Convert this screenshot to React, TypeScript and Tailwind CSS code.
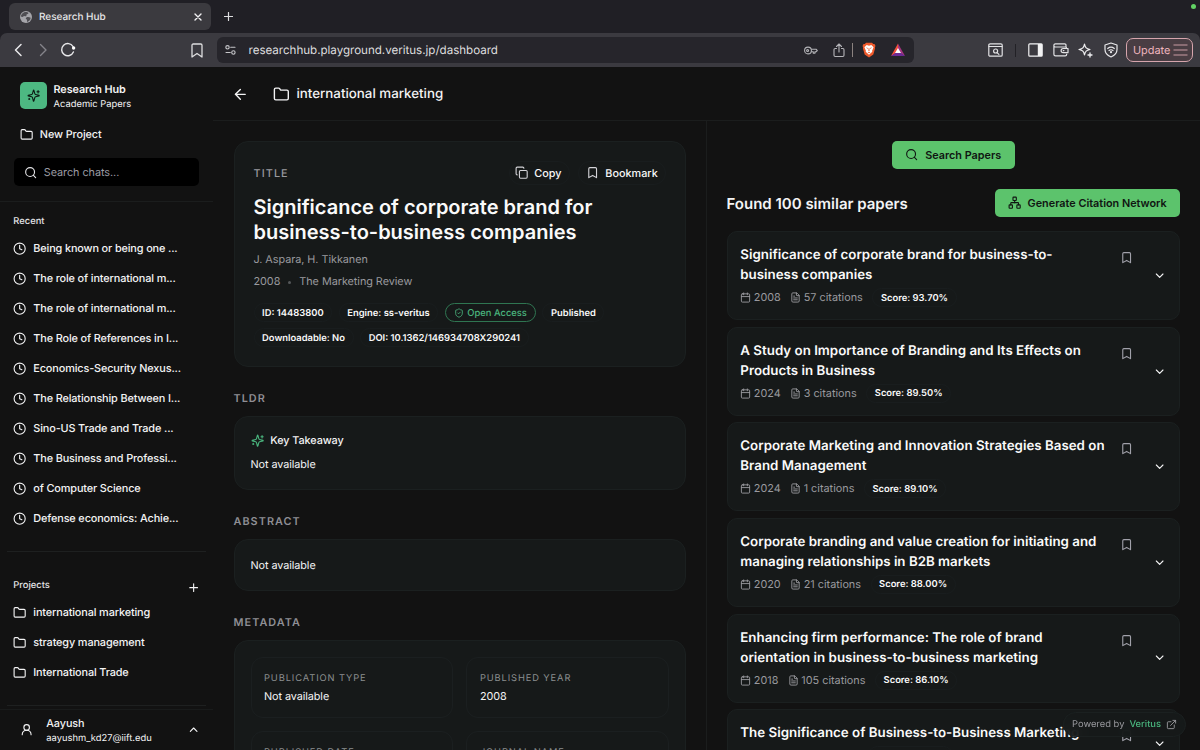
import type { ReactNode } from "react";
import {
  ArrowLeft,
  Bookmark,
  Calendar,
  ChevronDown,
  ChevronUp,
  Clock,
  Copy,
  ExternalLink,
  FileText,
  Folder,
  Network,
  Plus,
  Search,
  ShieldCheck,
  UserRound,
} from "lucide-react";

const recents = [
  "Being known or being one ...",
  "The role of international m...",
  "The role of international m...",
  "The Role of References in I...",
  "Economics-Security Nexus...",
  "The Relationship Between I...",
  "Sino-US Trade and Trade ...",
  "The Business and Professi...",
  "of Computer Science",
  "Defense economics: Achie...",
];

const projects = ["international marketing", "strategy management", "International Trade"];

const papers = [
  { lines: ["Significance of corporate brand for business-to-", "business companies"], year: "2008", cites: 57, score: "93.70" },
  { lines: ["A Study on Importance of Branding and Its Effects on", "Products in Business"], year: "2024", cites: 3, score: "89.50" },
  { lines: ["Corporate Marketing and Innovation Strategies Based on", "Brand Management"], year: "2024", cites: 1, score: "89.10" },
  { lines: ["Corporate branding and value creation for initiating and", "managing relationships in B2B markets"], year: "2020", cites: 21, score: "88.00" },
  { lines: ["Enhancing firm performance: The role of brand", "orientation in business-to-business marketing"], year: "2018", cites: 105, score: "86.10" },
  { lines: ["The Significance of Business-to-Business Marketing"], year: "2019", cites: 12, score: "85.90" },
];

function Sparkles({ color }: { color: string }) {
  return (
    <svg width="13.300" height="13.300" viewBox="0 0 24 24" fill="none" stroke={color} strokeWidth="2" strokeLinecap="round" strokeLinejoin="round">
      <path d="M9.937 15.500A2 2 0 0 0 8.500 14.063l-6.135-1.582a.5.5 0 0 1 0-.962L8.500 9.936A2 2 0 0 0 9.937 8.500l1.582-6.135a.5.5 0 0 1 .963 0L14.063 8.500A2 2 0 0 0 15.500 9.937l6.135 1.581a.5.5 0 0 1 0 .964L15.500 14.063a2 2 0 0 0-1.437 1.437l-1.582 6.135a.5.5 0 0 1-.963 0z" />
      <path d="M20 3v4M22 5h-4M4 17v2M5 18H3" />
    </svg>
  );
}

function BrowserChrome() {
  return (
    <div className="h-[67px] shrink-0 bg-[#201f25]">
      <div className="relative flex h-[33px] pl-[9px] pt-[3px]">
        <div className="flex h-[27px] w-[202px] items-center rounded-[6px] bg-[#3b3a3f] pl-[11px] pr-[9px]">
          <svg width="12" height="12" viewBox="0 0 12 12">
            <circle cx="6" cy="6" r="6" fill="#a5a5aa" />
            <path d="M4.200 1.200C6 .6 8 1.200 8.600 2c-.2 1-1.600 1-2 1.600-.3.600.2 1.200-.5 1.600-.8.400-1.300-.4-2-.3-.8.100-.8 1-1.600 1L.8 5.600C1 3.500 2.500 1.800 4.200 1.200zM6.800 6.200c1-.6 2.600-.2 3.900.6-.3 2-1.700 3.600-3.500 4.200-.6-.7.200-1.600-.3-2.300-.4-.5-1.200-.6-1.100-1.400 0-.5.5-.8 1-1.100z" fill="#4f4e53" />
          </svg>
          <span className="ml-[7px] flex-1 text-[10px] font-medium leading-[14px] tracking-[-0.03px] text-[#e6e6e8]">Research Hub</span>
          <svg width="8" height="8" viewBox="0 0 8 8" stroke="#f0f0f2" strokeWidth="1.4" strokeLinecap="round">
            <path d="m1 1 6 6M7 1 1 7" />
          </svg>
        </div>
        <svg className="ml-[13px] mt-[9px]" width="9" height="9" viewBox="0 0 9 9" stroke="#dcdcdf" strokeWidth="1.2" strokeLinecap="round">
          <path d="M4.500.5v8M.5 4.500h8" />
        </svg>
        <div className="absolute right-1 top-1 size-[5px] rounded-full bg-[#62d264]" />
      </div>
      <div className="flex h-[34px] items-center rounded-t-[7px] bg-[#3b3a40] pl-[14px] pr-[7px]">
        <svg width="9" height="14" viewBox="0 0 9 14" fill="none" stroke="#e8e8ea" strokeWidth="1.5" strokeLinecap="round" strokeLinejoin="round">
          <path d="M7 1.500 1.500 7 7 12.500" />
        </svg>
        <svg className="ml-4" width="9" height="14" viewBox="0 0 9 14" fill="none" stroke="#85848a" strokeWidth="1.400" strokeLinecap="round" strokeLinejoin="round">
          <path d="M1.500 1.500 7 7l-5.500 5.500" />
        </svg>
        <svg className="ml-[12px]" width="16" height="16" viewBox="0 0 16 16" fill="none" stroke="#e8e8ea" strokeWidth="1.400" strokeLinecap="round">
          <path d="M13.400 10A6.100 6.100 0 1 1 13 4.500" />
          <circle cx="13.600" cy="6" r="1.700" fill="#fff" stroke="none" />
        </svg>
        <svg className="ml-[115px]" width="12" height="15" viewBox="0 0 12 15" fill="none" stroke="#dededf" strokeWidth="1.300" strokeLinejoin="round">
          <path d="M1 2.200C1 1.500 1.500 1 2.200 1h7.600C10.500 1 11 1.500 11 2.200V14L6 10.500 1 14z" />
        </svg>
        <div className="ml-[14px] flex h-[26px] w-[697px] items-center rounded-[6px] bg-[#26252b] pl-[8px]">
          <svg width="11" height="10" viewBox="0 0 11 10" fill="none" stroke="#c6c6ca" strokeWidth="1.100" strokeLinecap="round">
            <circle cx="2.500" cy="2.300" r="1.700" />
            <path d="M5.700 2.300h4.300M1 7.500h4.300" />
            <circle cx="8.400" cy="7.500" r="1.700" />
          </svg>
          <span className="ml-[12.500px] w-[554.500px] text-[11.600px] leading-4 tracking-[-0.02px] text-[#dededf]">researchhub.playground.veritus.jp/dashboard</span>
          <svg className="ml-[1px]" width="14" height="9" viewBox="0 0 14 9" fill="none" stroke="#b4b4b8" strokeWidth="1.100" strokeLinejoin="round">
            <circle cx="4" cy="4.500" r="3.400" />
            <circle cx="3.600" cy="4.500" r="1" />
            <path d="M7.200 3.300h5.100l1 1.200-1.400 1.400-1 0v1.300H9.300V5.800H7.200" />
          </svg>
          <svg className="ml-[15px]" width="12" height="15" viewBox="0 0 12 15" fill="none" stroke="#b4b4b8" strokeWidth="1.100" strokeLinecap="round" strokeLinejoin="round">
            <path d="M6 9V1.200M3.500 3.500 6 1l2.500 2.500M3.500 5.500H2.200c-.7 0-1.200.5-1.200 1.200v5.600c0 .7.5 1.200 1.200 1.200h7.600c.7 0 1.200-.5 1.200-1.200V6.700c0-.7-.5-1.200-1.200-1.200H8.500" />
          </svg>
          <div className="ml-[7px] h-[14px] w-px bg-[#8b8280]" />
          <svg className="ml-[9px]" width="14" height="16" viewBox="0 0 14 16">
            <path d="M4 .8h6l1.200 1.300 1.300-.1 1 2-.6 1.300.2 1-1.800 6.200L7 15.400l-4.300-2.900L.9 6.300l.2-1L.5 4l1-2 1.300.1z" fill="#ef5a2c" />
            <path d="m7 3.700 2.300-.6 2.300 2.200-1.500 3.500.2 1L7 12.800 3.700 9.800l.2-1-1.500-3.500 2.300-2.200z" fill="#fff" />
            <path d="m4 5.300 1.900.8-.4 1zM10 5.300l-1.900.8.400 1zM6.700 6h.6l.3 2.800-.6.600-.6-.6zM5.600 10.400 7 9.900l1.400.5L7 11.300z" fill="#ef5a2c" />
          </svg>
          <svg className="ml-[14px]" width="16" height="14" viewBox="0 0 16 14">
            <path d="M8 .5 1 13 8 9z" fill="#f2503b" />
            <path d="m8 .5 7 12.500L8 9z" fill="#a3347f" />
            <path d="M1 13h14L8 8z" fill="#6b2b95" />
            <path d="m8 5 3 5H5z" fill="#fff" />
          </svg>
        </div>
        <div className="flex-1" />
        <svg width="15" height="14" viewBox="0 0 15 14" fill="none" stroke="#e2e2e4" strokeWidth="1.200" strokeLinecap="round">
          <rect x=".8" y=".8" width="13.400" height="12.400" rx="1.300" />
          <path d="M1 3.500h13M9.300 9.800l1.600 1.600" />
          <circle cx="7.600" cy="8" r="2" />
        </svg>
        <div className="ml-[12px] h-[13px] w-px bg-[#222126]" />
        <svg className="ml-[12px]" width="15" height="14" viewBox="0 0 15 14" fill="none" stroke="#f2f2f3" strokeWidth="1.200">
          <rect x=".8" y=".8" width="13.400" height="12.400" rx="1" />
          <path d="M9.800 1h4.200v12H9.800z" fill="#f2f2f3" stroke="none" />
        </svg>
        <svg className="ml-[10px]" width="16" height="14" viewBox="0 0 16 14" fill="none" stroke="#e2e2e4" strokeWidth="1.200" strokeLinejoin="round">
          <path d="M13 4V2.200C13 1.400 12.500.9 11.700.9H2.400C1.500.9.900 1.500.900 2.300v9c0 1 .6 1.600 1.600 1.600h9.600c1 0 1.600-.6 1.600-1.600v-.6M.9 2.500C.9 3.500 1.500 4 2.400 4h9.700c1 0 1.600.6 1.600 1.500" />
          <path d="M15 5.500v4.200h-4.800a2.100 2.100 0 0 1 0-4.200z" />
          <path d="M10.300 7.600h.6" strokeLinecap="round" />
        </svg>
        <svg className="ml-[9px]" width="15" height="15" viewBox="0 0 15 15" fill="none" stroke="#f0f0f2" strokeWidth="1.200" strokeLinejoin="round" strokeLinecap="round">
          <path d="M6.500 1c.8 3.800 1.800 4.800 5.500 5.500-3.700.8-4.700 1.700-5.500 5.500C5.700 8.200 4.800 7.300 1 6.500 4.800 5.800 5.700 4.800 6.500 1z" />
          <path d="M12 10v4M10 12h4" strokeWidth="1.300" />
        </svg>
        <svg className="ml-[11px]" width="14" height="16" viewBox="0 0 14 16" fill="none" stroke="#e8e8ea" strokeWidth="1.200" strokeLinecap="round" strokeLinejoin="round">
          <path d="M7 1 13 3v4.500c0 3.500-2.500 6-6 7.500-3.500-1.500-6-4-6-7.500V3z" />
          <path d="M3.700 6.500c2-1.600 4.600-1.600 6.600 0M5 8.500c1.200-.9 2.800-.9 4 0" />
          <circle cx="7" cy="10.200" r=".5" fill="#e8e8ea" />
        </svg>
        <div className="ml-[8px] flex h-[24px] w-[67px] items-center rounded-[7px] border border-[#d6a5ad] bg-[#493d43] pl-[6px]">
          <span className="w-[38px] text-[10.900px] leading-4 text-[#efb5bf]">Update</span>
          <svg className="ml-[2px]" width="15" height="12" viewBox="0 0 15 12" stroke="#c99ba3" strokeWidth="1.200">
            <path d="M.5 1h14M.5 6h14M.5 11h14" />
          </svg>
        </div>
      </div>
    </div>
  );
}

function NavRow({ icon, children }: { icon: ReactNode; children: ReactNode }) {
  return (
    <div className="flex h-[30px] items-center gap-[6.700px] pl-[13.300px] pt-px text-[10.900px] font-medium tracking-[-0.14px] text-[#f4f4f5]">
      {icon}
      <span className="whitespace-nowrap">{children}</span>
    </div>
  );
}

function Sidebar() {
  return (
    <aside className="flex w-[213px] shrink-0 flex-col text-[#f4f4f5]">
      <div className="flex h-[57px] items-center pl-5">
        <div className="flex size-[27px] items-center justify-center rounded-[5px] bg-[#4db882]">
          <Sparkles color="#0c1a13" />
        </div>
        <div className="ml-[6.500px] pt-[2px]">
          <div className="text-[10.830px] font-semibold leading-[15px] tracking-[-0.08px]">Research Hub</div>
          <div className="text-[9.400px] leading-[15px]">Academic Papers</div>
        </div>
      </div>
      <div className="flex h-[20px] items-center gap-[6.500px] pl-5 pt-px text-[10.830px] font-medium tracking-[-0.08px]">
        <Folder size={13.300} />
        <span className="pt-px">New Project</span>
      </div>
      <div className="ml-[14px] mt-[14px] flex h-[28px] w-[185px] items-center rounded-[5px] bg-black pl-[10px] pt-px text-[10.830px] tracking-[-0.05px] text-[#9b9ba3]">
        <Search size={13.300} color="#e4e4e7" />
        <span className="ml-[6.500px] pt-[2px]">Search chats...</span>
      </div>
      <div className="mt-[15px] h-px bg-[#1b1d1d]" />
      <div className="mt-[12px] pl-[13.300px] text-[9.400px] font-medium leading-[15px] text-[#e4e4e7]">Recent</div>
      <div className="mt-[4px]">
        {recents.map((item, i) => (
          <NavRow key={i} icon={<Clock size={13.300} />}>{item}</NavRow>
        ))}
      </div>
      <div className="mx-[6.700px] mt-[18px] h-px bg-[#1e2020]" />
      <div className="mt-[23px] flex h-[20px] items-center justify-between pl-[13.300px] pr-[13px]">
        <span className="pt-[3px] text-[9.400px] font-medium text-[#e4e4e7]">Projects</span>
        <Plus size={13.300} className="mt-[5px]" />
      </div>
      <div className="mt-[2px]">
        {projects.map((item) => (
          <NavRow key={item} icon={<Folder size={13.300} />}>{item}</NavRow>
        ))}
      </div>
      <div className="mx-[6.700px] mt-[18px] h-px bg-[#1e2020]" />
      <div className="mt-[3px] flex flex-1 items-center border-t border-[#191b1b] pl-5 pr-[13px]">
        <UserRound size={13.300} />
        <div className="ml-[13px] flex-1 pt-px">
          <div className="text-[10.830px] font-medium leading-[15px] tracking-[-0.1px]">Aayush</div>
          <div className="text-[9.400px] leading-[15px]">aayushm_kd27@iift.edu</div>
        </div>
        <ChevronUp size={13.300} />
      </div>
    </aside>
  );
}

function Badge({ children }: { children: ReactNode }) {
  return (
    <span className="flex h-[19px] items-center whitespace-nowrap rounded-full border border-[#191d1e] px-[7.600px] pt-[2px] text-[9.400px] font-semibold leading-[14px] tracking-normal text-[#fafafa]">
      {children}
    </span>
  );
}

function SectionLabel({ children }: { children: ReactNode }) {
  return <div className="text-[10.830px] font-semibold leading-[17px] tracking-[1.050px] text-[#8f8f95]">{children}</div>;
}

function MetaField({ label, value }: { label: string; value?: string }) {
  return (
    <div className="h-[61px] rounded-[12px] border border-[#1b1f20] px-[12.500px] pt-[12.500px]">
      <div className="text-[9.300px] leading-[16px] tracking-[0.900px] text-[#8b8f90]">{label}</div>
      <div className="text-[10.830px] leading-[20px] tracking-[-0.08px] text-[#f4f4f5]">{value}</div>
    </div>
  );
}

function PaperDetails() {
  return (
    <section className="flex w-[494px] shrink-0 flex-col overflow-hidden border-r border-[#1b1d1d] pl-[20.500px] pr-[20px] pt-5">
      <div className="h-[225.500px] shrink-0 rounded-[14px] border border-[#1b2020] bg-[#161919] px-[19px] pt-[19px]">
        <div className="flex h-[24px] items-center pr-[0.500px]">
          <div className="flex-1 pt-[2px] text-[10.830px] font-medium tracking-[1.100px] text-[#9a9a9f]">TITLE</div>
          <div className="flex h-[24px] w-[61px] items-center gap-[6.500px] rounded-full border border-[#191d1e] pl-[5px] text-[10.830px] font-medium text-[#fafafa]">
            <Copy size={13.300} color="#d4d4d8" />
            <span className="pt-[2px]">Copy</span>
          </div>
          <div className="ml-[8px] flex h-[24px] w-[88px] items-center gap-[6.500px] rounded-full border border-[#191d1e] pl-[7px] text-[10.830px] font-medium text-[#fafafa]">
            <Bookmark size={13.300} color="#d4d4d8" />
            <span className="pt-[2px]">Bookmark</span>
          </div>
        </div>
        <h1 className="mt-[10px] text-[20px] font-semibold leading-[25px] text-[#fafafa]">
          Significance of corporate brand for
          <br />
          business-to-business companies
        </h1>
        <div className="mt-[5px] text-[10.830px] leading-[20px] tracking-[-0.04px] text-[#9a9a9f]">J. Aspara, H. Tikkanen</div>
        <div className="mt-[2px] flex items-center text-[10.830px] leading-[20px] tracking-[-0.04px] text-[#9a9a9f]">
          2008
          <span className="mx-[8px] size-[3px] rounded-full bg-[#55585a]" />
          The Marketing Review
        </div>
        <div className="mt-[11px] flex gap-[6.500px]">
          <Badge>ID: 14483800</Badge>
          <Badge>Engine: ss-veritus</Badge>
          <span className="flex h-[19px] items-center gap-[3.500px] rounded-full border border-[#2f7551] px-[8px] text-[9.400px] font-medium text-[#4ab57e]">
            <ShieldCheck size={10} />
            <span className="pt-[2px] leading-[14px]">Open Access</span>
          </span>
          <Badge>Published</Badge>
        </div>
        <div className="mt-[6px] flex gap-[6.500px]">
          <Badge>Downloadable: No</Badge>
          <Badge>DOI: 10.1362/146934708X290241</Badge>
        </div>
      </div>
      <div className="mt-[23px]"><SectionLabel>TLDR</SectionLabel></div>
      <div className="mt-[9px] h-[74px] shrink-0 rounded-[14px] border border-[#1b2020] bg-[#161919] px-[16px] pt-[14px]">
        <div className="flex h-[20px] items-center gap-[6.500px] text-[10.830px] font-medium tracking-[-0.08px] text-[#f4f4f5]">
          <Sparkles color="#4ab57e" />
          <span className="pt-[2px]">Key Takeaway</span>
        </div>
        <div className="mt-[4px] text-[10.830px] leading-[20px] tracking-[-0.08px] text-[#f4f4f5]">Not available</div>
      </div>
      <div className="mt-[23px]"><SectionLabel>ABSTRACT</SectionLabel></div>
      <div className="mt-[9px] flex h-[52px] shrink-0 items-center rounded-[14px] border border-[#1b2020] bg-[#161919] px-[16px] pt-[3px] text-[10.830px] tracking-[-0.08px] text-[#f4f4f5]">
        Not available
      </div>
      <div className="mt-[23.500px]"><SectionLabel>METADATA</SectionLabel></div>
      <div className="mt-[9px] grid h-[210px] shrink-0 grid-cols-2 content-start gap-[13.300px] rounded-[14px] border border-[#1b2020] bg-[#161919] p-[16px]">
        <MetaField label="PUBLICATION TYPE" value="Not available" />
        <MetaField label="PUBLISHED YEAR" value="2008" />
        <MetaField label="PUBLISHED DATE" />
        <MetaField label="JOURNAL NAME" />
      </div>
    </section>
  );
}

function SimilarPapers() {
  return (
    <section className="flex flex-1 flex-col overflow-hidden pl-[19.500px] pr-5 pt-5">
      <div className="flex justify-center">
        <button className="flex h-[28px] w-[122.500px] items-center justify-center gap-[6.500px] rounded-[5px] bg-[#5cc36c] text-[10.830px] font-semibold text-[#101512]">
          <Search size={13.300} />
          <span className="pt-[2px]">Search Papers</span>
        </button>
      </div>
      <div className="mt-5 flex h-[28px] items-center justify-between">
        <h2 className="pt-[2px] text-[15px] font-semibold text-[#f4f4f5]">Found 100 similar papers</h2>
        <button className="flex h-[28px] w-[185.500px] items-center justify-center gap-[6.500px] rounded-[5px] bg-[#5cc36c] text-[10.830px] font-semibold text-[#101512]">
          <Network size={13.300} />
          <span className="pt-[2px]">Generate Citation Network</span>
        </button>
      </div>
      <div className="mt-[14px] flex flex-col gap-[6.670px]">
        {papers.map((p) => (
          <article key={p.lines[0]} className="flex shrink-0 items-start rounded-[10px] border border-[#1b2020] bg-[#161919] pb-[12px] pl-[12.800px] pr-[13px]">
            <div className="flex-1 pt-[13px]">
              {p.lines.map((line) => (
                <div key={line} className="whitespace-nowrap text-[13.330px] font-semibold leading-[20px] text-[#fafafa]">{line}</div>
              ))}
              <div className="mt-[3px] flex h-[19px] items-center text-[10.830px] text-[#9a9a9f]">
                <Calendar size={11} />
                <span className="ml-[2.500px] pt-px">{p.year}</span>
                <FileText size={11} className="ml-[9.500px]" />
                <span className="ml-[2.500px] mr-[9.500px] pt-px">{p.cites} citations</span>
                <Badge>Score: {p.score}%</Badge>
              </div>
            </div>
            <Bookmark size={13.300} color="#a1a1aa" className="mr-[19.500px] mt-[19px]" />
            <ChevronDown size={13.300} color="#f4f4f5" className="translate-y-[6px] self-center" />
          </article>
        ))}
      </div>
    </section>
  );
}

export default function App() {
  return (
    <div className="relative flex h-[750px] w-[1200px] flex-col overflow-hidden bg-[#121212] font-['Inter','Liberation_Sans',sans-serif] antialiased [text-rendering:geometricPrecision]">
      <BrowserChrome />
      <div className="flex min-h-0 flex-1">
        <Sidebar />
        <main className="flex min-w-0 flex-1 flex-col">
          <header className="flex h-[54px] shrink-0 items-center border-b border-[#1b1d1d] pl-[18.500px] pt-px text-[#f4f4f5]">
            <ArrowLeft size={16.700} />
            <Folder size={16.700} className="ml-[25px]" />
            <span className="ml-[6.500px] pt-[2px] text-[13.330px] font-medium">international marketing</span>
          </header>
          <div className="flex min-h-0 flex-1">
            <PaperDetails />
            <SimilarPapers />
          </div>
        </main>
      </div>
      <div className="absolute right-[14px] top-[712px] flex h-[25px] w-[123px] items-center rounded-full border border-[#1b2020] bg-[#161919]/90 pl-[8px] pt-px text-[9.400px] text-[#9a9a9f] backdrop-blur-sm">
        Powered by
        <span className="ml-[5px] font-medium text-[#4ab57e]">Veritus</span>
        <ExternalLink size={11} className="ml-[4.500px] -translate-y-px" />
      </div>
    </div>
  );
}
